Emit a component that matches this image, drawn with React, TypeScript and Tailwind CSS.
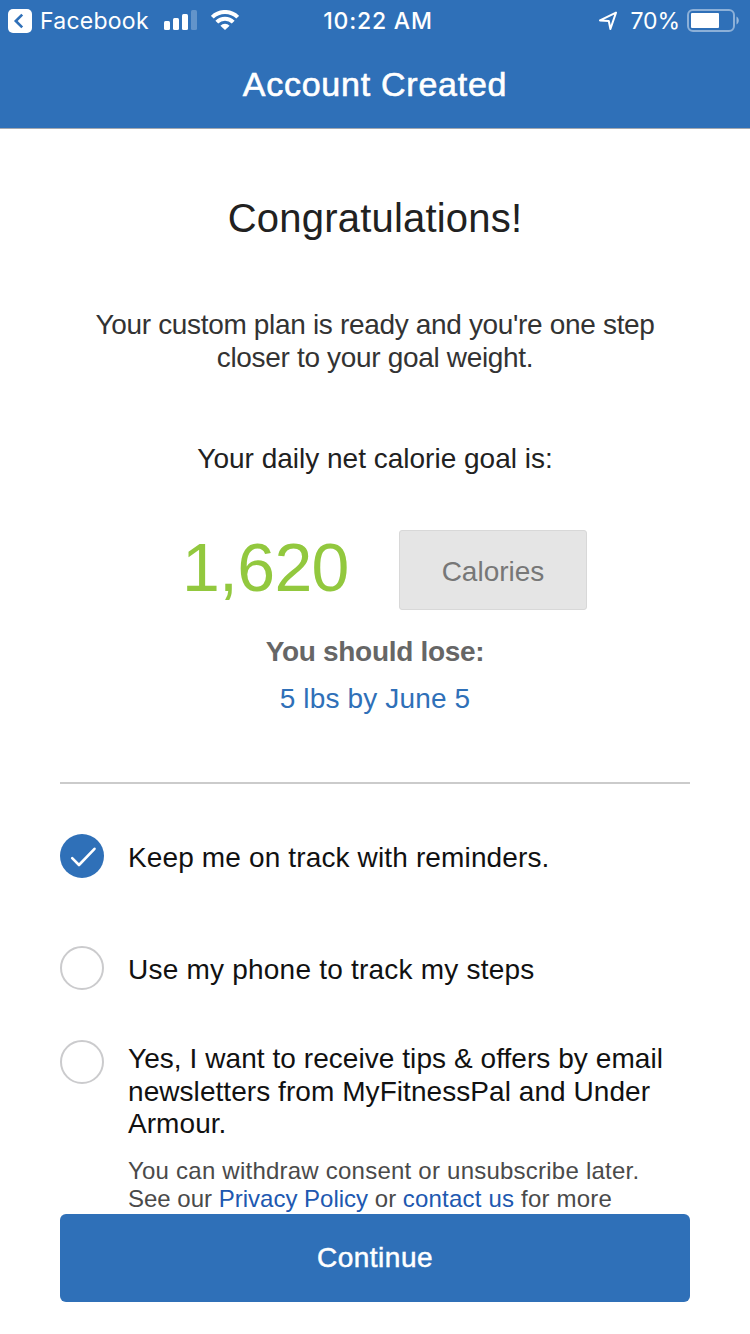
import type { ReactNode } from "react";

function StatusBar() {
  return (
    <div className="grid h-10 grid-cols-[1fr_auto_1fr] items-center font-['Inter',sans-serif] text-[23px] leading-[38px]">
      <div className="flex items-center pl-2">
        <svg width="24" height="26" viewBox="0 0 24 26" fill="none">
          <rect y="2" width="24" height="24" rx="5" fill="#fff" />
          <path d="M14.2 7.600 7.800 14l6.400 6.400" stroke="#2f70b8" strokeWidth="2.6" />
        </svg>
        <span className="ml-2 w-[109px] pt-0.5 whitespace-nowrap tracking-[0.25px]">Facebook</span>
        <svg className="ml-[15px]" width="33" height="20" viewBox="0 0 33 20" fill="#fff">
          <rect x="0" y="11" width="6" height="9" rx="1.5" />
          <rect x="9" y="8" width="6" height="12" rx="1.5" />
          <rect x="18" y="4" width="6" height="16" rx="1.5" />
          <rect x="27" y="0" width="6" height="20" rx="1.5" fillOpacity="0.25" />
        </svg>
        <svg className="ml-3.5" width="28" height="20" viewBox="0 0 28 20" fill="none" stroke="#fff" strokeWidth="4">
          <path d="M1.3 7.200a18 18 0 0 1 25.400 0" />
          <path d="M5.800 12.200a11.600 11.600 0 0 1 16.400 0" />
          <path d="M14 20 9.400 15.700a6.500 6.500 0 0 1 9.200 0Z" fill="#fff" stroke="none" />
        </svg>
      </div>
      <span className="pt-0.5 pl-1.5 font-medium tracking-[0.8px]">10:22 AM</span>
      <div className="flex items-center justify-end pr-[11px]">
        <svg width="20" height="20" viewBox="0 0 20 20" fill="none" stroke="#fff" strokeWidth="2" strokeLinejoin="round">
          <path d="M18 2.600 2 10.400l8.800.6 1.600 8Z" />
        </svg>
        <span className="ml-[13px] pt-0.5 tracking-[-0.1px]">70%</span>
        <svg className="ml-[7px]" width="52" height="24" viewBox="0 0 52 24" fill="none">
          <rect x="1" y="2" width="46" height="21" rx="5" stroke="#fff" strokeOpacity="0.45" strokeWidth="2" />
          <rect x="4" y="5" width="28" height="15" rx="1" fill="#fff" />
          <path d="M49.500 8.500c3 1.600 3 6.400 0 8Z" fill="#fff" fillOpacity="0.5" />
        </svg>
      </div>
    </div>
  );
}

function Option({ checked = false, className, children }: { checked?: boolean; className?: string; children: ReactNode }) {
  return (
    <div className={`flex items-start gap-6 ${className ?? ""}`}>
      {checked ? (
        <svg className="shrink-0" width="44" height="44" viewBox="0 0 44 44" fill="none">
          <circle cx="22" cy="22" r="22" fill="#2f70b8" />
          <path d="m12.200 24.200 6.800 6.800L34.500 14.800" stroke="#fff" strokeWidth="2.6" strokeLinecap="round" strokeLinejoin="round" />
        </svg>
      ) : (
        <div className="size-11 shrink-0 rounded-full border-2 border-[#cbcbcd]" />
      )}
      <div className="text-[28px] leading-[32.5px] whitespace-nowrap text-[#111]">{children}</div>
    </div>
  );
}

export default function App() {
  return (
    <div className="flex h-[1334px] w-[750px] flex-col overflow-hidden bg-white font-['Liberation_Sans',Arial,sans-serif]">
      <header className="h-[129px] shrink-0 border-b border-[#a3a8b0] bg-[#2f70b8] text-white">
        <StatusBar />
        <h1 className="text-center text-[34px] leading-[88px] tracking-[0.75px] [-webkit-text-stroke:0.6px_#fff]">Account Created</h1>
      </header>

      <main className="flex h-[1085px] shrink-0 flex-col overflow-hidden px-[60px] text-center text-[28px] leading-[34px] text-[#212121]">
        <h2 className="mt-[65px] text-[40px] leading-[48px] tracking-[0.2px]">Congratulations!</h2>
        <p className="mt-[66px] leading-[33px] tracking-[-0.33px] text-[#333]">
          Your custom plan is ready and you're one step
          <br />
          closer to your goal weight.
        </p>
        <p className="mt-[68px]">Your daily net calorie goal is:</p>
        <div className="mt-[54px] flex h-20 items-center pl-[122px]">
          <span className="w-[217px] pb-[5px] text-left text-[68px] leading-[75px] tracking-[-0.7px] text-[#92c83e]">1,620</span>
          <div className="h-20 w-[188px] rounded-[3px] border border-[#d8d8d8] bg-[#e5e5e5] pt-px leading-20 text-[#777]">Calories</div>
        </div>
        <p className="mt-[25px] font-bold tracking-[-0.3px] text-[#666]">You should lose:</p>
        <p className="mt-[13px] tracking-[0.15px] text-[#2f70b8]">5 lbs by June 5</p>
        <hr className="mt-[66px] border-t-2 border-[#cbcbcb]" />

        <div className="flex flex-col text-left">
          <Option checked className="mt-[50px]">
            <p className="pt-2 tracking-[0.14px]">Keep me on track with reminders.</p>
          </Option>
          <Option className="mt-[68px]">
            <p className="pt-2 tracking-[0.22px]">Use my phone to track my steps</p>
          </Option>
          <Option className="mt-[50px]">
            <p className="pt-[3px] tracking-[0.06px]">
              Yes, I want to receive tips &amp; offers by email
              <br />
              newsletters from MyFitnessPal and Under
              <br />
              Armour.
            </p>
            <p className="mt-4 text-2xl leading-7 text-[#4a4a4a]">
              <span className="tracking-[0.23px]">You can withdraw consent or unsubscribe later.</span>
              <br />
              See our <a className="text-[#2058b0]">Privacy Policy</a> or{" "}
              <span className="tracking-[0.2px]">
                <a className="text-[#2058b0]">contact us</a> for more
              </span>
            </p>
          </Option>
        </div>
      </main>

      <button className="mx-[60px] h-[88px] shrink-0 rounded-md bg-[#2f70b8] text-[28px] tracking-[0.5px] text-white [-webkit-text-stroke:0.5px_#fff]">Continue</button>
    </div>
  );
}
